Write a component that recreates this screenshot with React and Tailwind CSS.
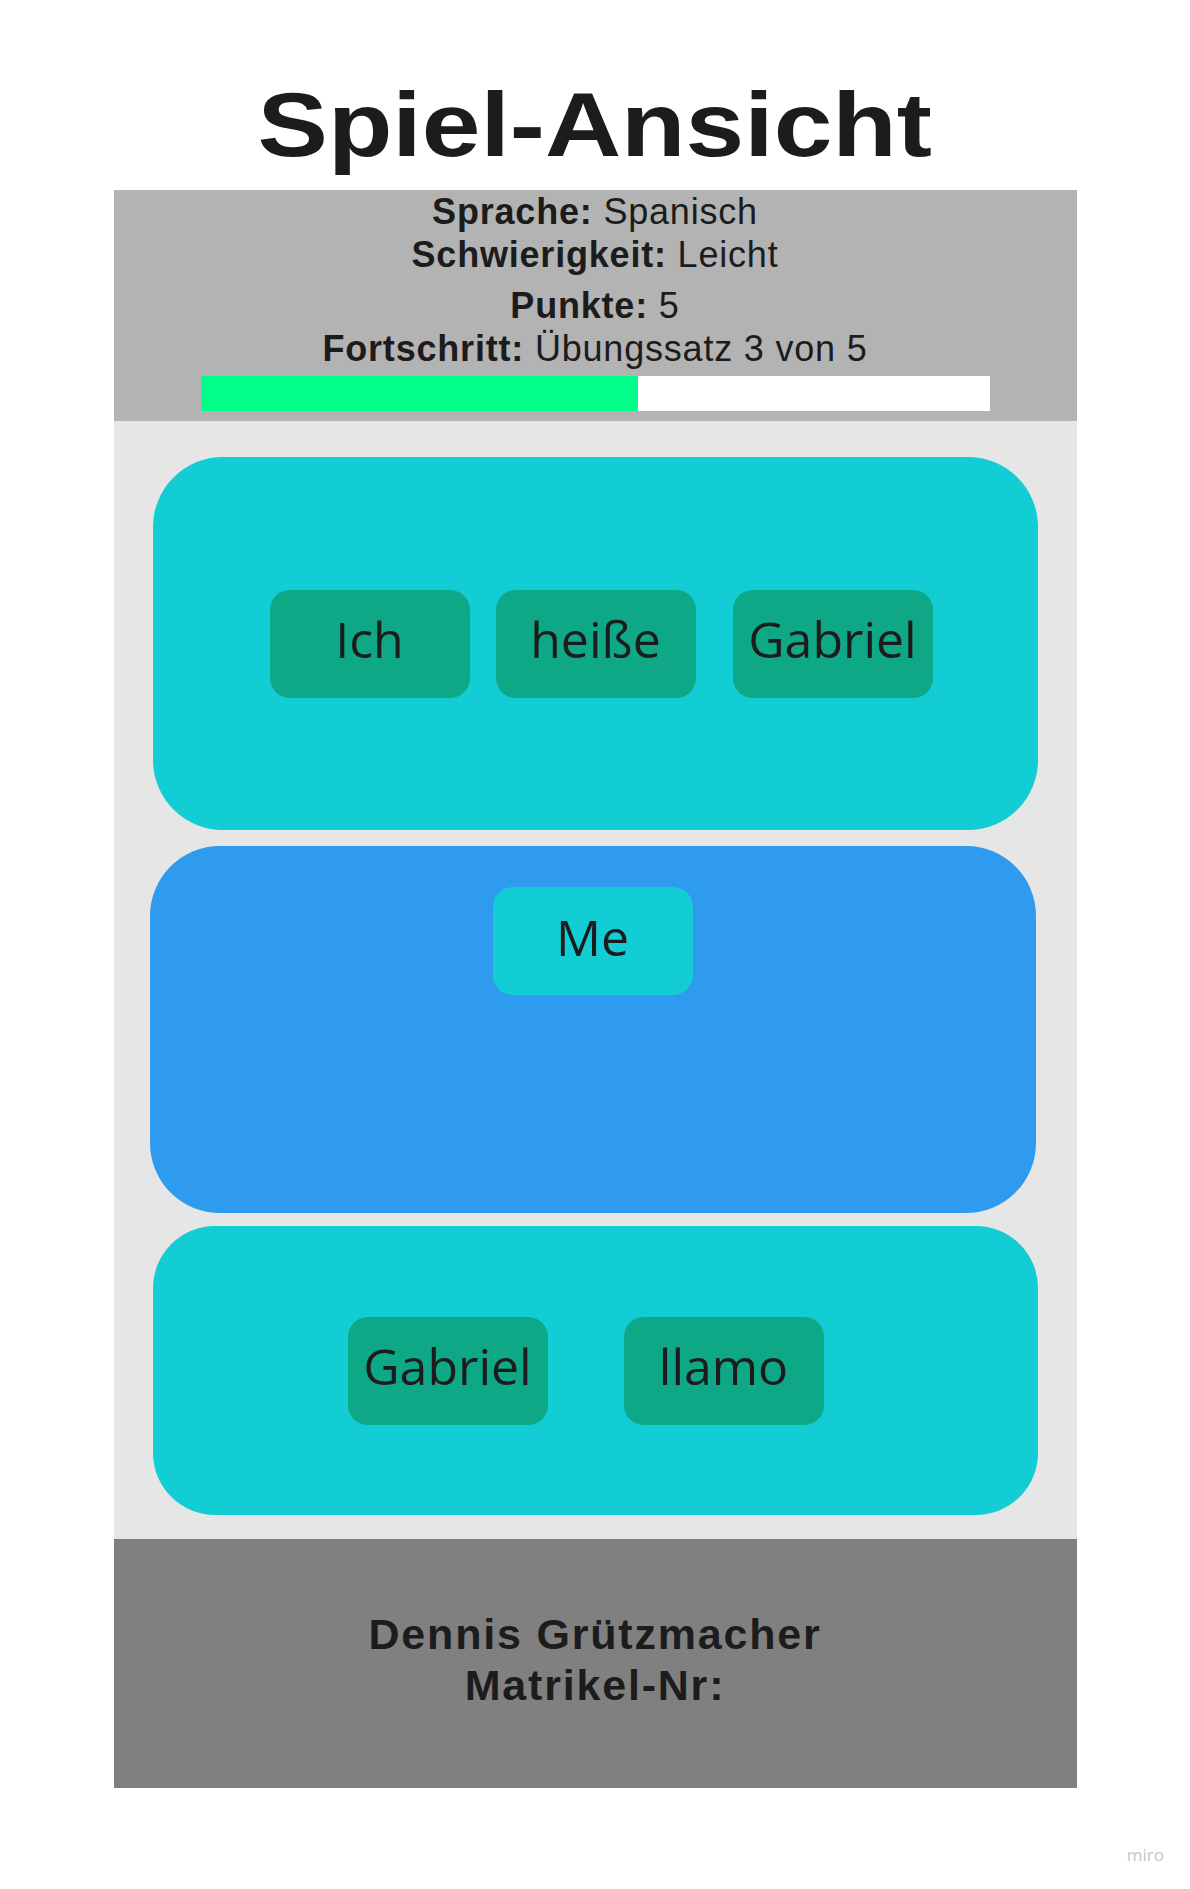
import React from 'react'

const sans = "font-['Liberation_Sans',Arial,sans-serif]"
const chipFont = "font-['Open_Sans',sans-serif]"

const Chip = ({ label, tone = 'bg-[#0ea887]' }) => (
  <div
    className={`${tone} ${chipFont} w-[200px] h-[108px] rounded-[20px] flex items-center justify-center pb-[9px] text-[50px] leading-none text-[#1c1c1c]`}
  >
    {label}
  </div>
)

const InfoLine = ({ label, value, className = '' }) => (
  <p className={`text-[36px] leading-[43px] tracking-[0.8px] ${className}`}>
    <span className="font-bold">{label}</span> {value}
  </p>
)

export default function App() {
  const progress = 437 / 789

  return (
    <div className={`w-[1190px] h-[1889px] bg-white text-[#1c1c1c] ${sans}`}>
      <div className="w-[963px] mx-auto">
        {/* Title */}
        <div className="h-[190px] pt-[80px] flex justify-center">
          <h1 className="inline-block scale-x-[1.16] text-[91px] leading-[90px] font-bold">
            Spiel-Ansicht
          </h1>
        </div>

        {/* Status header */}
        <div className="bg-[#b3b3b3] h-[231px] flex flex-col items-center">
          <InfoLine label="Sprache:" value="Spanisch" />
          <InfoLine label="Schwierigkeit:" value="Leicht" />
          <InfoLine label="Punkte:" value="5" className="mt-[8px]" />
          <InfoLine label="Fortschritt:" value="Übungssatz 3 von 5" />
          <div className="mt-[6px] w-[789px] h-[35px] bg-white flex">
            <div className="h-full bg-[#00ff8a]" style={{ width: `${progress * 100}%` }} />
          </div>
        </div>

        {/* Game area */}
        <div className="bg-[#e6e6e6] h-[1118px] pt-[36px] flex flex-col">
          <div className="ml-[39px] w-[885px] h-[373px] rounded-[70px] bg-[#12cdd4] flex items-center pl-[117px]">
            <Chip label="Ich" />
            <div className="ml-[26px]">
              <Chip label="heiße" />
            </div>
            <div className="ml-[37px]">
              <Chip label="Gabriel" />
            </div>
          </div>

          <div className="mt-[16px] ml-[36px] w-[886px] h-[367px] rounded-[70px] bg-[#2e9bef] flex justify-center pt-[41px]">
            <Chip label="Me" tone="bg-[#12cdd4]" />
          </div>

          <div className="mt-[13px] ml-[39px] w-[885px] h-[289px] rounded-[62px] bg-[#12cdd4] flex items-center pl-[195px]">
            <Chip label="Gabriel" />
            <div className="ml-[76px]">
              <Chip label="llamo" />
            </div>
          </div>
        </div>

        {/* Footer */}
        <div className="bg-[#808080] h-[249px] pt-[70px] flex flex-col items-center text-[43px] leading-[51px] font-bold tracking-[1.8px]">
          <p>Dennis Grützmacher</p>
          <p>Matrikel-Nr:</p>
        </div>
      </div>

      <div className={`mt-[57px] flex justify-end pr-[26px] ${chipFont} text-[17px] leading-[20px] text-[#c5c5d2]`}>
        miro
      </div>
    </div>
  )
}
